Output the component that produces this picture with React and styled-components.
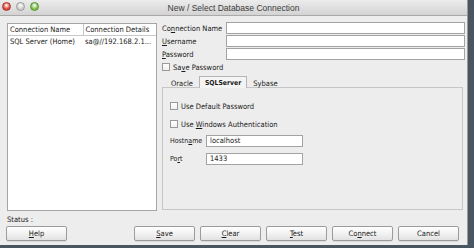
import styled, { createGlobalStyle } from "styled-components";

const Global = createGlobalStyle`
  html, body {
    margin: 0;
    padding: 0;
    background: #4a5562;
    overflow: hidden;
  }
  body {
    font-family: "DejaVu Sans Condensed", "Liberation Sans", Arial, sans-serif;
    font-size: 7.5px;
    color: #1a1a1a;
  }
`;

const Window = styled.div`
  width: 468px;
  height: 245px;
  background: #ededed;
  display: flex;
  flex-direction: column;
  border-right: 1px solid #9a9a9a;
  box-sizing: border-box;
`;

const TitleBar = styled.div`
  height: 16px;
  flex: none;
  position: relative;
  display: flex;
  align-items: center;
  justify-content: center;
  background: linear-gradient(#ececec, #d3d3d3);
  border-bottom: 1px solid #a9a9a9;
  box-sizing: border-box;
  font-family: "Liberation Sans", Arial, sans-serif;
  font-size: 8.5px;
  color: #3a3a3a;
`;

const Lights = styled.div`
  position: absolute;
  left: 2px;
  top: 2px;
  display: flex;
  gap: 5px;
`;

const Light = styled.span`
  width: 9px;
  height: 9px;
  border-radius: 50%;
  box-sizing: border-box;
  border: 1px solid ${(p) => p.$edge};
  background: radial-gradient(circle at 50% 35%, #fff 0, ${(p) => p.$color} 60%);
`;

const Main = styled.div`
  display: flex;
  gap: 5px;
  padding: 6px 0 0 7px;
  height: 188px;
  flex: none;
`;

const ListPanel = styled.div`
  width: 150px;
  height: 188px;
  margin-top: 1px;
  background: #fff;
  border: 1px solid #a5a5a5;
  box-sizing: border-box;
`;

const Table = styled.table`
  border-collapse: collapse;
  width: 100%;
  table-layout: fixed;
`;

const Th = styled.th`
  text-align: left;
  font-weight: normal;
  height: 11px;
  padding: 0 0 0 2px;
  border-right: 1px solid #c8c8c8;
  border-bottom: 1px solid #c8c8c8;
  white-space: nowrap;
  overflow: hidden;
  &:last-child { border-right: none; }
`;

const Td = styled.td`
  height: 11px;
  padding: 0 0 0 2px;
  white-space: nowrap;
  overflow: hidden;
`;

const Right = styled.div`
  width: 303px;
  display: flex;
  flex-direction: column;
`;

const Form = styled.div`
  display: grid;
  grid-template-columns: 64px 239px;
  row-gap: 1px;
  align-items: center;
`;

const Label = styled.span`
  white-space: nowrap;
`;

const Input = styled.div`
  height: ${(p) => p.$h || 12}px;
  background: #fff;
  border: 1px solid #a3a3a3;
  box-sizing: border-box;
  padding-left: 3px;
  line-height: ${(p) => (p.$h || 12) - 2}px;
  width: ${(p) => (p.$w ? p.$w + "px" : "auto")};
`;

const CheckRow = styled.div`
  display: flex;
  align-items: center;
  gap: 3px;
  height: ${(p) => p.$h}px;
  margin-top: ${(p) => p.$mt || 0}px;
`;

const Box = styled.span`
  width: 8px;
  height: 8px;
  border: 1px solid #9a9a9a;
  background: linear-gradient(#fff, #f0f0f0);
  box-sizing: border-box;
  flex: none;
`;

const Tabs = styled.div`
  display: flex;
  gap: 1px;
  margin-top: 3px;
  padding-left: 4px;
  height: 12px;
  align-items: flex-end;
`;

const Tab = styled.div`
  height: ${(p) => (p.$active ? 12 : 11)}px;
  padding: 0 ${(p) => (p.$active ? 5 : 4)}px;
  display: flex;
  align-items: center;
  box-sizing: border-box;
  font-weight: ${(p) => (p.$active ? "bold" : "normal")};
  font-size: ${(p) => (p.$active ? 6.8 : 7.5)}px;
  background: ${(p) => (p.$active ? "#f4f4f4" : "transparent")};
  border: 1px solid ${(p) => (p.$active ? "#b5b5b5" : "transparent")};
  border-bottom: none;
  position: relative;
  z-index: 1;
  margin-bottom: -1px;
`;

const TabPane = styled.div`
  flex: 1;
  border: 1px solid #c6c6c6;
  background: #ededed;
  margin-right: 2px;
  padding: 13px 0 0 7px;
  display: flex;
  flex-direction: column;
`;

const FieldRow = styled.div`
  display: flex;
  align-items: center;
  margin-top: ${(p) => p.$mt || 0}px;
`;

const FieldLabel = styled.span`
  width: 36px;
  flex: none;
  white-space: nowrap;
  font-size: 7px;
`;

const Status = styled.div`
  padding: 5px 0 0 7px;
  height: 10px;
  line-height: 10px;
`;

const ButtonBar = styled.div`
  display: flex;
  align-items: center;
  padding: 1px 8px 0 6px;
  gap: 5px;
`;

const Button = styled.button`
  width: 61px;
  height: 15px;
  padding: 0;
  font-family: inherit;
  font-size: 7.5px;
  color: #1a1a1a;
  border: 1px solid #9c9c9c;
  border-radius: 2px;
  background: linear-gradient(#ffffff, #f2f2f2 50%, #e2e2e2);
  box-shadow: 0 1px 0 rgba(0, 0, 0, 0.08);
`;

const Spacer = styled.div`
  flex: 1;
`;

const U = styled.span`
  text-decoration: underline;
`;

export default function App() {
  return (
    <>
      <Global />
      <Window>
        <TitleBar>
          <Lights>
            <Light $color="#e0463c" $edge="#a8322c" />
            <Light $color="#cfcfcf" $edge="#9a9a9a" />
            <Light $color="#7cc04a" $edge="#4f8f2c" />
          </Lights>
          New / Select Database Connection
        </TitleBar>
        <Main>
          <ListPanel>
            <Table>
              <colgroup>
                <col style={{ width: 75 }} />
                <col />
              </colgroup>
              <thead>
                <tr>
                  <Th>Connection Name</Th>
                  <Th>Connection Details</Th>
                </tr>
              </thead>
              <tbody>
                <tr>
                  <Td>SQL Server (Home)</Td>
                  <Td>sa@//192.168.2.1...</Td>
                </tr>
              </tbody>
            </Table>
          </ListPanel>
          <Right>
            <Form>
              <Label>
                Co<U>n</U>nection Name
              </Label>
              <Input />
              <Label>
                <U>U</U>sername
              </Label>
              <Input />
              <Label>
                <U>P</U>assword
              </Label>
              <Input />
            </Form>
            <CheckRow $h={10} $mt={2}>
              <Box />
              <span>
                Sa<U>v</U>e Password
              </span>
            </CheckRow>
            <Tabs>
              <Tab>Oracle</Tab>
              <Tab $active>SQLServer</Tab>
              <Tab>Sybase</Tab>
            </Tabs>
            <TabPane>
              <CheckRow $h={10}>
                <Box />
                <span>Use Default Password</span>
              </CheckRow>
              <CheckRow $h={10} $mt={8}>
                <Box />
                <span>
                  Use <U>W</U>indows Authentication
                </span>
              </CheckRow>
              <FieldRow $mt={6}>
                <FieldLabel>
                  Hostn<U>a</U>me
                </FieldLabel>
                <Input $w={97}>localhost</Input>
              </FieldRow>
              <FieldRow $mt={6}>
                <FieldLabel>
                  Po<U>r</U>t
                </FieldLabel>
                <Input $w={97}>1433</Input>
              </FieldRow>
            </TabPane>
          </Right>
        </Main>
        <Status>Status :</Status>
        <ButtonBar>
          <Button>
            <U>H</U>elp
          </Button>
          <Spacer />
          <Button>
            <U>S</U>ave
          </Button>
          <Button>
            <U>C</U>lear
          </Button>
          <Button>
            <U>T</U>est
          </Button>
          <Button>
            Co<U>n</U>nect
          </Button>
          <Button>Cancel</Button>
        </ButtonBar>
      </Window>
    </>
  );
}
